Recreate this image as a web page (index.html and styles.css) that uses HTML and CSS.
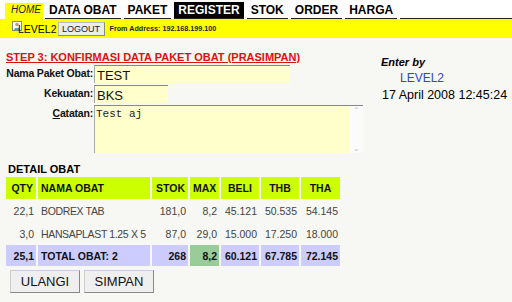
FILE: index.html
```html
<!DOCTYPE html>
<html lang="id">
<head>
    <meta charset="UTF-8">
    <title>Register Paket Obat</title>
    <link rel="stylesheet" href="styles.css">
</head>
<body>
    <div class="menu">
        <a class="tab home">HOME</a>
        <a class="tab">DATA OBAT</a>
        <a class="tab">PAKET</a>
        <a class="tab active">REGISTER</a>
        <a class="tab">STOK</a>
        <a class="tab">ORDER</a>
        <a class="tab">HARGA</a>
        <div class="menu-rest"></div>
    </div>
    <div class="userbar">
        <span class="user-icon">
            <svg width="10" height="10" viewBox="0 0 10 10">
                <rect x="0.5" y="0.5" width="9" height="9" fill="#fff" stroke="#888"/>
                <circle cx="5" cy="3.5" r="1.8" fill="#c96"/>
                <path d="M2 9 C2 6 8 6 8 9 Z" fill="#69c"/>
            </svg>
        </span>
        <span class="user-name">LEVEL2</span>
        <button class="logout">LOGOUT</button>
        <span class="address">From Address: 192.168.199.100</span>
    </div>

    <div class="main">
        <div class="left">
            <h3 class="step">STEP 3: KONFIRMASI DATA PAKET OBAT (PRASIMPAN)</h3>
            <div class="form">
                <label>Nama Paket Obat:</label>
                <input class="ipt wide" type="text" value="TEST">
                <label>Kekuatan:</label>
                <input class="ipt short" type="text" value="BKS">
                <label><u>C</u>atatan:</label>
                <div class="memo">
                    <div class="memo-text">Test aj</div>
                    <div class="scroll">
                        <span class="arrow">&#8963;</span>
                        <span class="arrow">&#8964;</span>
                    </div>
                </div>
            </div>
        </div>
        <div class="right">
            <div class="enter">Enter by</div>
            <div class="who">LEVEL2</div>
            <div class="when">17 April 2008 12:45:24</div>
        </div>
    </div>

    <div class="detail">
        <div class="detail-title">DETAIL OBAT</div>
        <table class="obat">
            <tr class="head">
                <th>QTY</th>
                <th class="l">NAMA OBAT</th>
                <th>STOK</th>
                <th>MAX</th>
                <th class="c">BELI</th>
                <th class="c">THB</th>
                <th class="c">THA</th>
            </tr>
            <tr>
                <td>22,1</td>
                <td class="l">BODREX TAB</td>
                <td>181,0</td>
                <td>8,2</td>
                <td>45.121</td>
                <td>50.535</td>
                <td>54.145</td>
            </tr>
            <tr>
                <td>3,0</td>
                <td class="l">HANSAPLAST 1.25 X 5</td>
                <td>87,0</td>
                <td>29,0</td>
                <td>15.000</td>
                <td>17.250</td>
                <td>18.000</td>
            </tr>
            <tr class="total">
                <td>25,1</td>
                <td class="l">TOTAL OBAT: 2</td>
                <td>268</td>
                <td class="max">8,2</td>
                <td>60.121</td>
                <td>67.785</td>
                <td>72.145</td>
            </tr>
        </table>
        <div class="actions">
            <button class="btn">ULANGI</button>
            <button class="btn">SIMPAN</button>
        </div>
    </div>
</body>
</html>
```

FILE: styles.css
```css
* {
    margin: 0;
    padding: 0;
    box-sizing: border-box;
}
body {
    width: 512px;
    height: 302px;
    overflow: hidden;
    background-color: #f7f7f3;
    font-family: "Liberation Sans", Arial, sans-serif;
    color: #000;
}

/* top menu */
.menu {
    display: flex;
    align-items: flex-end;
    height: 19px;
    padding-left: 5px;
    background-color: #fff;
}
.tab {
    font-size: 12px;
    font-weight: bold;
    line-height: 16px;
    padding: 0 4px;
    margin-right: 3px;
    border-bottom: 1px solid #222;
    height: 17px;
    white-space: nowrap;
}
.tab.home {
    background-color: #ffff00;
    font-size: 10px;
    font-weight: normal;
    font-style: italic;
    color: #1a1a4d;
    padding: 0 5px 0 6px;
    width: 38px;
    height: 16px;
    border-bottom: none;
    line-height: 13px;
    margin-right: 2px;
}
.tab.active {
    background-color: #000;
    color: #fff;
}
.menu-rest {
    flex: 1;
    height: 17px;
    border-bottom: 1px solid #222;
}
.userbar {
    display: flex;
    align-items: center;
    height: 19px;
    background-color: #ffff00;
    padding-left: 12px;
}
.user-icon {
    display: flex;
    width: 10px;
    height: 10px;
    margin-top: -6px;
}
.user-name {
    font-size: 10.5px;
    margin-left: -4px;
    margin-right: 1px;
}
.logout {
    font-family: "Liberation Sans", Arial, sans-serif;
    font-size: 9px;
    width: 47px;
    height: 14px;
    background-color: #ececec;
    border: 1px solid #bbb;
    border-right-color: #888;
    border-bottom-color: #888;
    color: #222;
}
.address {
    font-size: 7.2px;
    font-weight: bold;
    margin-left: 5px;
    color: #222;
}

/* form section */
.main {
    display: flex;
    padding-top: 13px;
}
.left {
    width: 376px;
    padding-left: 6px;
}
.step {
    font-size: 11px;
    font-weight: bold;
    color: #dd1111;
    text-decoration: underline;
    line-height: 13px;
    margin-bottom: 1px;
}
.form {
    display: grid;
    grid-template-columns: 88px auto;
    row-gap: 2px;
    align-items: start;
}
.form label {
    font-size: 10.5px;
    font-weight: bold;
    letter-spacing: -0.2px;
    white-space: nowrap;
    text-align: right;
    padding-top: 2px;
    padding-right: 1px;
    color: #111;
}
.ipt {
    font-family: "Liberation Sans", Arial, sans-serif;
    font-size: 13px;
    height: 18px;
    padding: 2px 2px 0;
    background-color: #ffffcc;
    border: none;
    border-top: 1px solid #888;
    border-left: 1px solid #aaa;
    color: #111;
}
.ipt.wide {
    width: 196px;
}
.ipt.short {
    width: 74px;
}
.memo {
    display: flex;
    width: 269px;
    height: 48px;
    background-color: #ffffcc;
    border-top: 1px solid #888;
    border-left: 1px solid #aaa;
}
.memo-text {
    flex: 1;
    font-family: "Liberation Mono", "Courier New", monospace;
    font-size: 11px;
    padding: 2px 1px;
    color: #222;
}
.scroll {
    width: 14px;
    background-color: #fbfbfb;
    display: flex;
    flex-direction: column;
    justify-content: space-between;
    align-items: center;
    font-size: 8px;
    color: #bbb;
}
.right {
    padding-top: 4px;
    padding-left: 5px;
}
.enter {
    font-size: 11px;
    font-weight: bold;
    font-style: italic;
    line-height: 14px;
}
.who {
    font-size: 12px;
    color: #3344cc;
    padding-left: 19px;
    margin-top: 1px;
    line-height: 16px;
}
.when {
    font-size: 12.5px;
    line-height: 18px;
    margin-left: 1px;
}

/* detail table */
.detail {
    padding-left: 6px;
    padding-top: 10px;
}
.detail-title {
    font-size: 11px;
    font-weight: bold;
    padding-left: 2px;
    line-height: 13px;
    margin-bottom: 1px;
}
.obat {
    border-collapse: separate;
    border-spacing: 2px 0;
    margin-left: -2px;
    font-size: 10.5px;
    table-layout: fixed;
    width: 338px;
}
.obat th {
    background-color: #ccff00;
    height: 22px;
    font-weight: bold;
    text-align: right;
    padding: 0 3px;
    color: #111;
    white-space: nowrap;
}
.obat td {
    height: 23px;
    text-align: right;
    padding: 0 2px;
    color: #444;
    white-space: nowrap;
}
.obat .l {
    text-align: left;
    padding-left: 3px;
    padding-right: 0;
}
.obat td.l {
    letter-spacing: -0.35px;
}
.obat th.c {
    text-align: center;
}
.obat th:nth-child(1) { width: 30px; }
.obat th:nth-child(2) { width: 112px; }
.obat th:nth-child(3) { width: 36px; }
.obat th:nth-child(4) { width: 29px; }
.obat th:nth-child(5) { width: 38px; }
.obat th:nth-child(6) { width: 38px; }
.obat th:nth-child(7) { width: 39px; }
.total td {
    background-color: #ccccff;
    font-weight: bold;
    color: #111;
    height: 21px;
}
.total td.l {
    letter-spacing: 0;
}
.total td.max {
    background-color: #99cc99;
}
.actions {
    display: flex;
    gap: 4px;
    padding-left: 4px;
    padding-top: 4px;
}
.btn {
    font-family: "Liberation Sans", Arial, sans-serif;
    font-size: 13px;
    width: 70px;
    height: 23px;
    background-color: #efefef;
    border: 1px solid #ccc;
    border-right-color: #888;
    border-bottom-color: #888;
    color: #111;
}
```
